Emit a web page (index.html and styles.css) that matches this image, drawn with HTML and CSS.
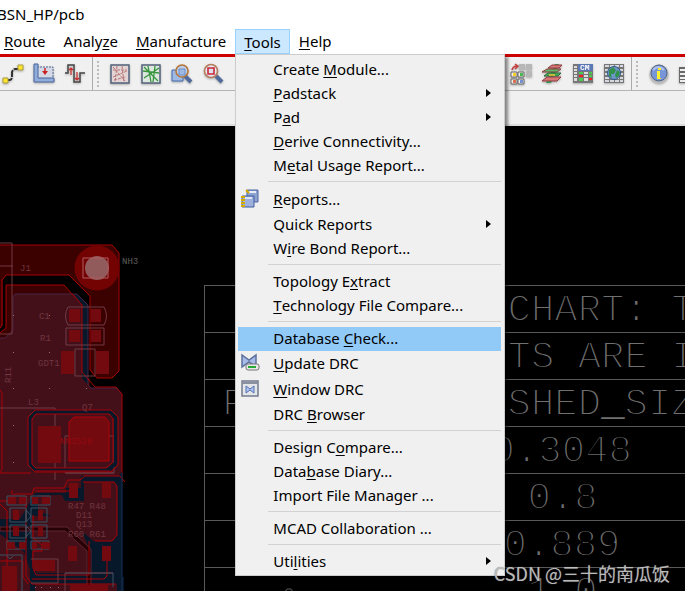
FILE: index.html
```html
<!DOCTYPE html>
<html lang="en">
<head>
<meta charset="utf-8">
<title>BSN_HP/pcb</title>
<link rel="stylesheet" href="styles.css">
</head>
<body>
<header class="titlebar">BSN_HP/pcb</header>
<nav class="menubar">
  <button class="menu-title"><u>R</u>oute</button>
  <button class="menu-title">Analy<u>z</u>e</button>
  <button class="menu-title"><u>M</u>anufacture</button>
  <div class="menu-anchor">
    <button class="menu-title open"><u>T</u>ools</button>
    <div class="popup">
      <button class="item">Create <u>M</u>odule...</button>
      <button class="item sub"><u>P</u>adstack</button>
      <button class="item sub">P<u>a</u>d</button>
      <button class="item"><u>D</u>erive Connectivity...</button>
      <button class="item">M<u>e</u>tal Usage Report...</button>
      <hr>
      <button class="item tall"><svg class="item-icon" viewBox="0 0 20 20"><path d="M7 1h11v12H7z" fill="#8ea2d2" stroke="#4e68a2"/><path d="M9 3h7" stroke="#e8edfa" stroke-width="2"/><path d="M6 1l3 3" stroke="#d9a800" stroke-width="2"/><path d="M2 7h12v11H2z" fill="#9eb1dc" stroke="#405d9c"/><path d="M5 9h7" stroke="#dce4f7" stroke-width="2"/><path d="M1 8h4M1 11h4M1 14h4M1 17h4" stroke="#d7ac00" stroke-width="2"/></svg><u>R</u>eports...</button>
      <button class="item sub">Quick Reports</button>
      <button class="item">W<u>i</u>re Bond Report...</button>
      <hr>
      <button class="item">Topology E<u>x</u>tract</button>
      <button class="item"><u>T</u>echnology File Compare...</button>
      <hr>
      <button class="item selected">Database <u>C</u>heck...</button>
      <button class="item tall"><svg class="item-icon" viewBox="0 0 20 20"><path d="M2 2v12l7-5 7 5V2L9 7z" fill="#a7bbe8" stroke="#5d719d" stroke-width="1.5"/><rect x="6" y="11" width="13" height="6" rx="2" fill="#e8e8e8" stroke="#777"/><path d="M8 14h8" stroke="#25aa38" stroke-width="2"/></svg><u>U</u>pdate DRC</button>
      <button class="item tall"><svg class="item-icon" viewBox="0 0 20 20"><path d="M2 2h16v15H2z" fill="#e3e5e8" stroke="#737b8d" stroke-width="1.5"/><path d="M2 4h16" stroke="#8a90a0" stroke-width="2"/><path d="M6 7v7l4-3 4 3V7l-4 3z" fill="#adc2f0" stroke="#5471b1"/></svg><u>W</u>indow DRC</button>
      <button class="item">DRC <u>B</u>rowser</button>
      <hr>
      <button class="item">Design C<u>o</u>mpare...</button>
      <button class="item">Data<u>b</u>ase Diary...</button>
      <button class="item">Import File Manager ...</button>
      <hr>
      <button class="item">MCAD Collaboration ...</button>
      <hr>
      <button class="item sub">Uti<u>l</u>ities</button>
    </div>
  </div>
  <button class="menu-title"><u>H</u>elp</button>
</nav>
<div class="toolbar">
  <div class="tools lead">
    <button class="tool" aria-label="Route"><svg viewBox="0 0 22 22"><path d="M4 17h4q2 0 2-4V9q1-3 3-3h5" fill="none" stroke="#333" stroke-width="2" stroke-dasharray="7 1"/><path d="M1 15h5v5H1zM16 2h5v5h-5z" fill="#ffe52e" stroke="#aa9d45"/></svg></button>
    <button class="tool" aria-label="Slide"><svg viewBox="0 0 22 22"><path d="M4 4h16v12H4z" fill="#d3d9e5" stroke="#506796" stroke-dasharray="2 1"/><path d="M1 1h4v14h16v4H1z" fill="#91addc" stroke="#4b659a"/><path d="M12 5v3" stroke="#c22" stroke-width="1.5"/><path d="M9 8h6l-3 4z" fill="#c22"/></svg></button>
    <button class="tool" aria-label="Delay tune"><svg viewBox="0 0 22 22"><path d="M1 10h3V2h6v17h6v-9h5" fill="none" stroke="#444" stroke-width="1.5"/><path d="M7 12V5M5 7l2-2 2 2M13 9v8M11 15l2 2 2-2" fill="none" stroke="#ce2929" stroke-width="1.2"/></svg></button>
  </div>
  <div class="tools group">
    <button class="tool" aria-label="Unrats all"><svg viewBox="0 0 22 22"><path d="M2 2h18v18H2z" fill="#e3d5d5" stroke="#53627b" stroke-width="1.5"/><path d="M4 7h14M4 14l14-6M8 3l-2 16M13 3l2 16M4 4l12 14M5 17l12-3" stroke="#b97676" stroke-dasharray="3 1"/></svg></button>
    <button class="tool" aria-label="Rats all"><svg viewBox="0 0 22 22"><path d="M2 2h18v18H2z" fill="#dce7df" stroke="#53627b" stroke-width="1.5"/><path d="M3 8l16 2M4 15L19 5M8 3l3 16M15 3l-2 16M4 4l14 14" stroke="#36943c" stroke-width="1.3"/></svg></button>
    <button class="tool" aria-label="Zoom points"><svg viewBox="0 0 22 22"><path d="M1 7h11v11H1z" fill="#9fb9e5" stroke="#446caf"/><path d="M14 13l6 6" stroke="#536b9a" stroke-width="4"/><circle cx="11" cy="8" r="6" fill="#bed1f1" fill-opacity=".9" stroke="#b67638" stroke-width="1.6"/><path d="M8 6h6v6H8z" fill="#9fb9e5" stroke="#6d8fc9"/></svg></button>
    <button class="tool" aria-label="Zoom fit"><svg viewBox="0 0 22 22"><path d="M14 13l6 6" stroke="#536b9a" stroke-width="4"/><circle cx="9" cy="8" r="6.5" fill="#e5eaf5" stroke="#b67c5c" stroke-width="1.6"/><path d="M6 5h6v6H6z" fill="#dfe3ee" stroke="#cb2639" stroke-width="1.6"/></svg></button>
  </div>
  <div class="tools right">
    <button class="tool" aria-label="Place"><svg viewBox="0 0 22 22"><path d="M9 1h6v6H9zM16 1h6v6h-6zM16 8h6v6h-6z" fill="#b7b7b7"/><path d="M1 9h6v5H1zM8 9h6v5H8zM1 16h6v5H1zM8 16h6v5H8z" fill="#eee" stroke="#666"/><path d="M3 10h3v3H3z" fill="#ffce25"/><path d="M10 10h3v3h-3z" fill="#47b84e"/><path d="M3 17h3v3H3z" fill="#db724f"/><path d="M10 17h3v3h-3z" fill="#7390d4"/><path d="M2 7q1-4 5-4M5 1l3 2-3 3" fill="none" stroke="#c53d3d" stroke-width="1.5"/></svg></button>
    <button class="tool" aria-label="Cross section"><svg viewBox="0 0 22 22"><path d="M5 20l9-19h4l-8 19z" fill="#369a50"/><path d="M7 5h11l3-3H11z" fill="#d77876" stroke="#923d40"/><path d="M1 9h15l4-3H6z" fill="#5cb96b" stroke="#923d40"/><path d="M3 13h14l3-3H7z" fill="#4caf5c" stroke="#286a35"/><path d="M1 18h15l4-4H6z" fill="#d77876" stroke="#923d40"/><path d="M8 12h6" stroke="#edc53c" stroke-width="1.5"/></svg></button>
    <button class="tool" aria-label="Constraint manager"><svg viewBox="0 0 22 22"><path d="M1 1h20v19H1z" fill="#777"/><path d="M2 3h3v2H2zM2 6h3v2H2zM2 9h3v2H2zM2 12h3v2H2zM2 15h3v3H2zM12 9h4v2h-4zM12 12h4v2h-4zM12 15h4v3h-4z" fill="#ddd"/><path d="M6 1h15v7H6z" fill="#5d79b5"/><path d="M7 9h4v2H7zM17 9h3v2h-3zM7 15h4v3H7zM17 12h3v2h-3z" fill="#49c94e"/><path d="M7 12h4v2H7zM17 15h3v2h-3z" fill="#f01d22"/><text x="8" y="7" class="icon-text">CM</text></svg></button>
    <button class="tool" aria-label="Global view"><svg viewBox="0 0 22 22"><path d="M1 1h20v19H1z" fill="#777"/><path d="M2 3h18M2 7h18M2 11h18M2 15h18M2 18h18" stroke="#d5d9df" stroke-width="2" stroke-dasharray="4 1"/><circle cx="11" cy="10" r="6.5" fill="#6f97cc" stroke="#315784"/><path d="M6 7l4-3 3 3-2 4H8l1 4-3-2zM14 7l3 2-1 4-3 2-1-3z" fill="#34904d"/></svg></button>
  </div>
  <div class="tools group">
    <button class="tool" aria-label="Information"><svg viewBox="0 0 22 22"><circle cx="11" cy="11" r="9.5" fill="#bbb"/><circle cx="11" cy="10" r="8" fill="#7895d7" stroke="#536687"/><path d="M5 7q5-6 11 0" fill="none" stroke="#b0c3ee" stroke-width="2"/><path d="M10 5h3v2h-3zM9 8h3v7h1v1H9z" fill="#fff02d"/></svg></button>
    <button class="tool" aria-label="List"><svg viewBox="0 0 22 22"><path d="M0 4h20v16H0z" fill="#696969"/><path d="M1 7h6M1 11h6M1 15h6M1 18h6" stroke="#eee" stroke-width="2"/></svg></button>
  </div>
</div>
<div class="toolbar second"></div>
<main class="canvas">
  <svg class="board" viewBox="0 126 204 465">
    <path class="copper" d="M0 245h112l7 8v118l-7 7H97l-7-8v221H0z"/>
    <path class="void" d="M0 329l3-4v-45l3-5h63l21 21v82h-8V305l-18-20H6v43l-6 5z"/>
    <path class="plane" d="M0 338h5l8-8v-33l2-3h62l11 11v81l3 2h25l6 6v197H0z"/>
    <path class="blue" d="M74 294h3l11 11v80l-6-7v-73z"/>
    <path class="violet" d="M0 338h5l8-8v-33l2-3h62l11 11v80l3 3h25l6 6"/>
    <path class="copper" d="M91 297v76l6 5h15l7-7v-74z"/>
    <path class="red" d="M0 245h112l7 8v118l-7 7H97l-7-8v-74l-21-21H6l-4 5v45l-2 3M0 333l6-5v-43h58l18 20v67l13 15h21l6 7v88M0 390l2 3v76l-2 4"/>
    <path class="outline" d="M0 243h12v91H0M0 266h13M0 408h55v72M65 436h49v37H65z"/>
    <circle cx="97" cy="268" r="22.5" fill="#730203"/>
    <circle cx="97" cy="268" r="12" fill="#915b5b"/>
    <path d="M83 258h25v20H83z" fill="none" stroke="#b25c60"/>
    <path class="outline" d="M68 307h36q5 9 0 18H68q-5-9 0-18zM66 328h38v17H66zM75 349h20v27H75z"/>
    <path class="pad" d="M69 309h11v13H69zM91 309h10v13H91zM69 330h11v12H69zM91 330h10v12H91zM61 351h13v23H61zM96 351h13v23H96zM38 426h23v37H38z"/>
    <path class="ring" d="M34 412h77l5 6v45l-8 7H35l-5-6v-46z"/>
    <path class="red" d="M35 410h76l7 7v48l-7 7H35l-7-7v-48zM36 414h73l4 5v43l-7 6H36l-4-4v-45z"/>
    <path d="M74 417h31l4 5v39H69v-39z" fill="#730a0f" stroke="#b00006"/>
    <path class="blue" d="M35 493h31v-5h15v-12h37l4-4v119H30v-21l-6-18-24-18v-15h20z"/>
    <path class="plane" d="M0 480h65v7H35l-5 7H0zM84 482h30l3 4v49l-4 6H93l-10-9-14-5-15-10-16-6V495h24l3 6h19zM32 516h44l14 35v22H37l-5-7zM0 558h24v33H0z"/>
    <path class="blue" d="M33 577h91v14H33z"/>
    <path class="plane" d="M35 584h82v7H35z"/>
    <path d="M0 527h67l24 22v42h-4v-40l-22-20H0z" fill="#250005" stroke="#612331"/>
    <path class="red" d="M35 471h75M0 473h31M0 501h7l8-7h17l2-6h30l4-8h12l5-4h35l5 6M83 482h31l3 4v49l-5 6H95M35 491h38M12 495v-5M0 504l7 7v66l3 2M26 496v80l6 8h84M33 515v23l9 7v6h-9v17l3 7h53v-34M32 579h72l3-3v-26M0 561h23v16l5 7"/>
    <path class="teal" d="M7 496h19v9H7zM31 496h19v9H31zM10 508h16v14H10zM31 508h16v14H31zM10 525h16v13H10zM31 525h16v13H31zM7 541h18v8H7zM31 541h18v8H31zM0 555h22v36M65 573h48v14"/>
    <path class="outline" d="M31 559h27v24H31M65 591v-18h48M66 473h48"/>
    <path class="pad" d="M69 483h9v15h-9zM102 483h9v15h-9zM68 546h9v15h-9zM102 546h9v15h-9zM8 497h8v7H8zM19 497h7v7h-7zM32 497h6v7h-6zM42 497h8v7h-8zM13 510h6v10h-6zM38 510h5v10h-5zM13 526h6v10h-6zM38 526h5v10h-5zM7 542h8v7H7zM19 542h7v7h-7zM32 542h5v7h-5zM42 542h8v7h-8zM33 560h22v11H33zM2 566h15v25H2zM70 585h38v6H70z"/>
    <path class="teal" d="M26 510v12l5-6zM26 526v11l5-6zM7 556q3 5 6 0"/>
    <path class="edge" d="M122 473v118"/>
    <g fill="#91717a"><path d="M13 315h1v1h-1zM49 315h1v1h-1zM13 352h1v1h-1zM49 352h1v1h-1zM13 388h1v1h-1zM49 388h1v1h-1zM86 388h1v1h-1zM13 425h1v1h-1zM13 462h1v1h-1zM35 587h1v1h-1zM41 587h1v1h-1zM50 587h1v1h-1zM58 587h1v1h-1z"/></g>
    <g class="labels">
      <text x="20" y="271">J1</text><text class="pale" x="122" y="264">NH3</text>
      <text x="39" y="319">C1</text><text x="40" y="341">R1</text><text x="38" y="366">GDT1</text>
      <text x="28" y="405">L3</text><text x="82" y="410">Q7</text><text class="net" x="60" y="444">NM3520</text>
      <text x="68" y="509">R47 R48</text><text x="76" y="518">D11</text><text x="76" y="527">Q13</text><text x="68" y="537">R60 R61</text>
      <text transform="translate(11 383) rotate(-90)">R11</text>
    </g>
  </svg>
  <table class="chart">
    <colgroup><col class="figure"><col></colgroup>
    <tbody>
      <tr><td></td><td class="title">CHART: T</td></tr>
      <tr><td></td><td class="title">TS ARE I</td></tr>
      <tr><td class="first">F</td><td class="title">SHED<span class="line">_</span>SIZ</td></tr>
      <tr><td></td><td>0.3048</td></tr>
      <tr><td></td><td class="far">0.8</td></tr>
      <tr><td></td><td class="near">0.889</td></tr>
      <tr><td class="symbol"><svg viewBox="0 0 8 12"><path d="M0 12V5l2-3h4l2 3v7" fill="none" stroke="#5a5a5a"/></svg></td><td class="far">1.0</td></tr>
    </tbody>
  </table>
</main>
<div class="watermark">CSDN @三十的南瓜饭</div>
</body>
</html>
```
FILE: styles.css
```css
* { box-sizing: border-box; }
body {
  margin: 0;
  height: 100vh;
  display: flex;
  flex-direction: column;
  overflow: hidden;
  position: relative;
  background: #fff;
  color: #000;
  font: 15px/24px "Noto Sans", "Noto Sans CJK SC", sans-serif;
}
button {
  margin: 0;
  border: 0;
  padding: 0;
  background: none;
  color: inherit;
  font: inherit;
}
u { text-underline-offset: 2px; text-decoration-thickness: 1px; text-decoration-skip-ink: none; }
.titlebar { height: 29px; padding-top: 2px; margin-left: -3px; }
.menubar { display: flex; height: 25px; margin-left: -5px; }
.menu-title { height: 25px; padding: 0 9px 2px; }
.menu-anchor { position: relative; }
.open { background: #cce8ff; border: 1px solid #99d1ff; padding: 0 8px 2px; }
.popup {
  position: absolute;
  z-index: 2;
  top: 100%;
  left: 0;
  width: 270px;
  padding: 3px 3px 1px 2px;
  background: #f0f0f0;
  border: 1px solid #ccc;
  box-shadow: 3px 3px 3px rgba(0, 0, 0, .45);
}
.item {
  display: flex;
  align-items: center;
  position: relative;
  width: 100%;
  height: 24px;
  padding: 0 0 2px 35px;
  white-space: pre;
  text-align: left;
}
.tall { height: 26px; }
.item-icon { position: absolute; left: 2px; width: 20px; height: 20px; }
.selected { background: #91c9f7; }
.sub::after {
  content: "";
  margin-left: auto;
  margin-right: 10px;
  border: 4px solid transparent;
  border-left: 5px solid #000;
  border-right: 0;
}
.popup hr { height: 1px; margin: 3px 0 5px 30px; border: 0; background: #d2d2d2; }
.toolbar {
  display: flex;
  flex: none;
  height: 37px;
  background: #f0f0f0;
  border-top: 3px solid #c00;
  border-bottom: 1px solid #b4b4b4;
  overflow: hidden;
}
.second { height: 35px; border-top: 0; border-bottom: 2px solid #ddd; }
.tools { display: flex; flex: none; align-items: center; gap: 9px; }
.lead { padding: 0 6px 0 2px; }
.group { border-left: 1px solid #aaa; padding-left: 16px; position: relative; }
.lead + .group { margin-right: 286px; }
.group::before {
  content: "";
  position: absolute;
  left: 4px;
  top: 4px;
  bottom: 3px;
  border-left: 2px dotted #bbb;
}
.right { padding-right: 6px; }
.tool { width: 22px; height: 22px; }
.tool svg { display: block; width: 22px; height: 22px; filter: drop-shadow(0 1px 1px #aaa); }
.icon-text { font: bold 8px "Liberation Mono", monospace; fill: #fff; }
.canvas { flex: 1; display: flex; min-height: 0; overflow: hidden; background: #000; }
.board { flex: none; width: 204px; height: 465px; fill: none; }
.copper { fill: #3b0000; }
.void { fill: #000; }
.plane { fill: #43101a; }
.blue { fill: #06182a; }
.ring { stroke: #06182a; stroke-width: 4px; }
.violet { stroke: #482544; }
.board .red { stroke: #a90006; }
.outline { stroke: #713a42; }
.teal { stroke: #3d5263; }
.pad { fill: #730a0f; }
.edge { stroke: #153358; }
.labels { font: 9px "Liberation Mono", monospace; fill: #70353e; }
.pale { fill: #5d5d5d; }
.net { fill: #94090f; }
.chart {
  flex: none;
  align-self: flex-start;
  width: 520px;
  margin-top: 159px;
  border-collapse: collapse;
  table-layout: fixed;
  border: 1px solid #5a5a5a;
  color: #707070;
  font: 39px/40px "Liberation Mono", monospace;
  -webkit-text-stroke: 2px #000;
}
.figure { width: 287px; }
.chart tr { height: 47px; border-bottom: 1px solid #5a5a5a; }
.chart td { padding: 4px 0 0; white-space: pre; }
.chart .title { padding-left: 16px; }
.chart .near { padding-left: 12px; }
.chart .far { padding-left: 36px; }
.chart .first { padding-left: 17px; }
.chart .symbol { padding-left: 80px; }
.line { -webkit-text-stroke: 0; }
.symbol svg { display: block; width: 8px; height: 12px; }
.watermark {
  position: absolute;
  z-index: 3;
  right: 15px;
  bottom: 6px;
  color: rgba(205, 205, 205, .85);
  font: 18px/24px "Noto Sans CJK SC", sans-serif;
  text-shadow: 0 0 1px #666;
}
```
